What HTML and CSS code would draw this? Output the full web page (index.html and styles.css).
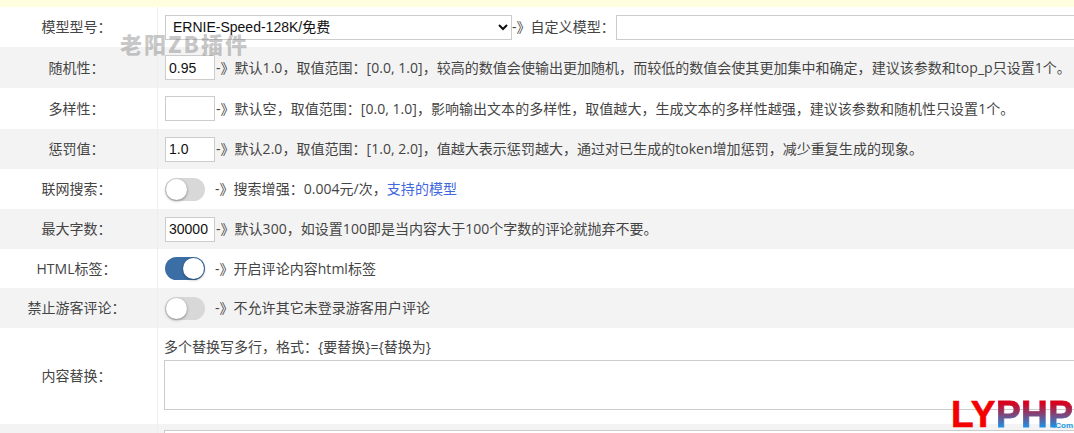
FILE: index.html
```html
<!DOCTYPE html>
<html lang="zh">
<head>
<meta charset="utf-8">
<title>模型设置</title>
<link rel="stylesheet" href="styles.css">
</head>
<body>
<div class="notice"></div>
<div class="row r40">
  <div class="label">模型型号：</div>
  <div class="field">
    <select class="model"><option>ERNIE-Speed-128K/免费</option></select>
    <span class="hint tight">-》自定义模型：</span>
    <input class="custom" type="text">
  </div>
</div>
<div class="row r41 alt">
  <div class="label">随机性：</div>
  <div class="field"><input class="num" type="text" value="0.95"><span class="hint">-》默认1.0，取值范围：[0.0, 1.0]，较高的数值会使输出更加随机，而较低的数值会使其更加集中和确定，建议该参数和top_p只设置1个。</span></div>
</div>
<div class="row r41">
  <div class="label">多样性：</div>
  <div class="field"><input class="num" type="text"><span class="hint">-》默认空，取值范围：[0.0, 1.0]，影响输出文本的多样性，取值越大，生成文本的多样性越强，建议该参数和随机性只设置1个。</span></div>
</div>
<div class="row r40 alt">
  <div class="label">惩罚值：</div>
  <div class="field"><input class="num" type="text" value="1.0"><span class="hint">-》默认2.0，取值范围：[1.0, 2.0]，值越大表示惩罚越大，通过对已生成的token增加惩罚，减少重复生成的现象。</span></div>
</div>
<div class="row r40">
  <div class="label">联网搜索：</div>
  <div class="field"><span class="switch"><span class="knob"></span></span><span class="hint gap">-》搜索增强：0.004元/次，<a class="link" href="#">支持的模型</a></span></div>
</div>
<div class="row r40 alt">
  <div class="label">最大字数：</div>
  <div class="field"><input class="num" type="text" value="30000"><span class="hint">-》默认300，如设置100即是当内容大于100个字数的评论就抛弃不要。</span></div>
</div>
<div class="row r39">
  <div class="label">HTML标签：</div>
  <div class="field"><span class="switch on"><span class="knob"></span></span><span class="hint gap">-》开启评论内容html标签</span></div>
</div>
<div class="row r40 alt">
  <div class="label">禁止游客评论：</div>
  <div class="field"><span class="switch"><span class="knob"></span></span><span class="hint gap">-》不允许其它未登录游客用户评论</span></div>
</div>
<div class="row r96">
  <div class="label">内容替换：</div>
  <div class="field stack">
    <div class="caption">多个替换写多行，格式：{要替换}={替换为}</div>
    <textarea class="area"></textarea>
  </div>
</div>
<div class="row r40 alt">
  <div class="label"></div>
  <div class="field top"><input class="next" type="text"></div>
</div>
<div class="mark">老阳ZB插件</div>
<div class="logo"><span class="ly">LY</span><span class="php">PHP</span><span class="com">.Com</span></div>
</body>
</html>
```
FILE: styles.css
```css
* { box-sizing: border-box; }
html, body { height: 433px; overflow: hidden; }
body {
  margin: 0;
  width: 1074px;
  position: relative;
  background: #fff;
  color: #444;
  font: 14px/20px "Open Sans", "Noto Sans CJK SC", sans-serif;
}
.notice { height: 7px; background: #ffffdf; }
.row { display: flex; overflow: hidden; }
.r39 { height: 39px; }
.r40 { height: 40px; }
.r41 { height: 41px; }
.r96 { height: 96px; }
.alt { background: #f3f3f3; }
.label {
  flex: 0 0 158px;
  display: flex;
  align-items: center;
  justify-content: center;
  padding-right: 4px;
  border-right: 1px solid #eeeeee;
}
.field {
  flex: 1;
  min-width: 0;
  display: flex;
  align-items: center;
  padding-left: 7px;
  white-space: nowrap;
}
.stack { flex-direction: column; align-items: flex-start; padding-top: 9px; padding-left: 6px; }
.top { align-items: flex-start; padding-top: 6px; padding-left: 6px; }
.caption { height: 23px; line-height: 20px; }
select, input, textarea {
  border: 1px solid #ccc;
  background: #fff;
  color: #111;
  font: 14px "Liberation Sans", "Noto Sans CJK SC", sans-serif;
  border-radius: 0;
  outline: 0;
}
.model { flex: none; width: 347px; height: 25px; padding: 0 3px; }
.custom { flex: none; width: 600px; height: 25px; }
.num { flex: none; width: 50px; height: 25px; padding: 0 3px; }
.area { flex: none; width: 1000px; height: 50px; resize: none; }
.next { flex: none; width: 1000px; height: 25px; }
.hint { margin-left: 1px; letter-spacing: .03px; }
.tight { margin-left: 0; margin-right: 1px; }
.gap { margin-left: 10px; }
.link { color: #3f68e0; text-decoration: none; }
.switch {
  flex: none;
  width: 40px;
  height: 23px;
  border-radius: 12px;
  background: #d8d8d8;
  display: flex;
  align-items: center;
  padding: 1px;
}
.knob {
  width: 21px;
  height: 21px;
  border-radius: 50%;
  background: #fff;
  box-shadow: 0 1px 3px rgba(0, 0, 0, .4);
}
.switch.on { background: #3b6ea5; justify-content: flex-end; }
.mark {
  position: absolute;
  left: 120px;
  top: 30px;
  color: rgba(120, 120, 120, .42);
  font: 900 22px/26px "Noto Sans CJK SC", sans-serif;
  letter-spacing: 2px;
  white-space: nowrap;
}
.logo {
  position: absolute;
  left: 951px;
  top: 396px;
  width: 123px;
  height: 37px;
  font: 700 37px/37px "Liberation Sans", sans-serif;
  letter-spacing: .5px;
  white-space: nowrap;
  -webkit-text-stroke: .6px currentColor;
}
.ly { color: #f30000; }
.php {
  background: linear-gradient(#d8001c 22%, #1f8fe0 80%);
  -webkit-background-clip: text;
  background-clip: text;
  color: transparent;
  -webkit-text-stroke: .8px transparent;
}
.com {
  position: absolute;
  right: 1px;
  bottom: 3px;
  font: 700 8px/8px "Liberation Sans", sans-serif;
  letter-spacing: 0;
  -webkit-text-stroke: 0;
  color: #1e9be8;
}
```
